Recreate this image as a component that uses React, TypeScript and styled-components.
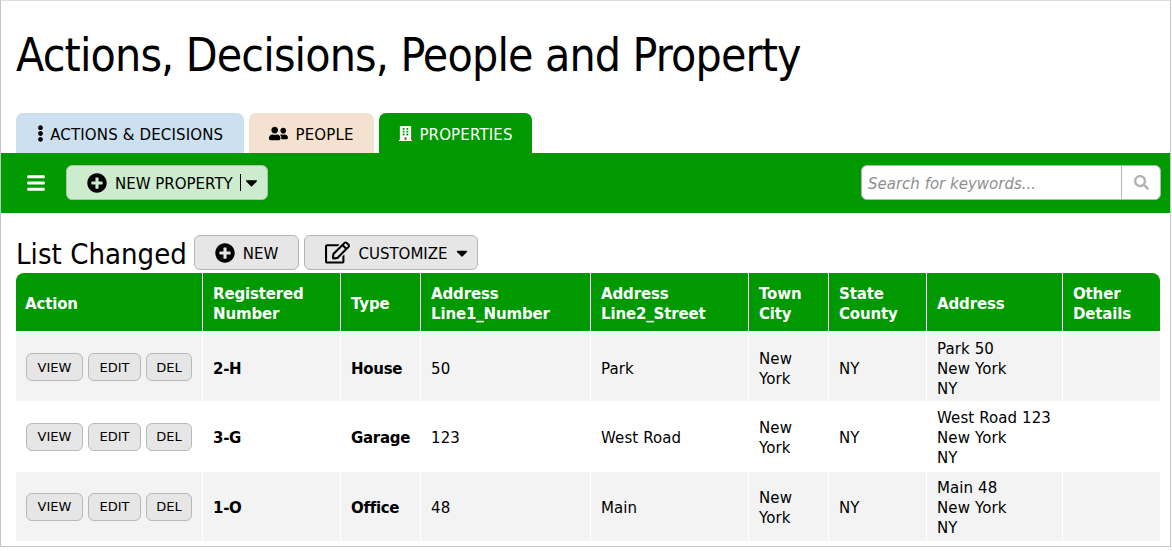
import React from 'react';
import styled, { createGlobalStyle } from 'styled-components';
import { FaBars, FaBuilding, FaCaretDown, FaEllipsisV, FaPlusCircle, FaRegEdit, FaSearch, FaUserFriends } from 'react-icons/fa';

const Global = createGlobalStyle`
  html, body { margin: 0; padding: 0; background: #fff; }
  body { font-family: "DejaVu Sans", Verdana, sans-serif; color: #000; }
  * { box-sizing: border-box; }
`;

const Page = styled.div`
  width: 1171px;
  height: 547px;
  border: 1px solid #c4c4c4;
  border-top-color: #dcdcdc;
  overflow: hidden;
`;

const Title = styled.h1`
  margin: 0;
  padding: 26px 15px 0;
  height: 112px;
  font-size: 46px;
  line-height: 56px;
  font-weight: 400;
  font-stretch: condensed;
  letter-spacing: -0.85px;
  white-space: nowrap;
`;

const Tabs = styled.div`
  display: flex;
  gap: 5px;
  padding-left: 15px;
  height: 40px;
`;

const Tab = styled.div<{ $bg: string; $fg: string; $w: number }>`
  width: ${p => p.$w}px;
  display: flex;
  align-items: center;
  justify-content: center;
  gap: 7px;
  padding-top: 4px;
  background: ${p => p.$bg};
  color: ${p => p.$fg};
  border-radius: 7px 7px 0 0;
  font-size: 15px;
  letter-spacing: 0.15px;
  svg { margin-top: -3px; }
`;

const DotsIcon = styled(FaEllipsisV)`
  font-size: 17px;
  margin-left: -5px;
  margin-right: -5.5px;
`;

const PeopleIcon = styled(FaUserFriends)`
  font-size: 19px;
`;

const BuildingIcon = styled(FaBuilding)`
  font-size: 15px;
  margin-right: -1px;
`;

const Bar = styled.div`
  height: 60px;
  background: #009900;
  display: flex;
  align-items: center;
  padding: 0 9px 1px 25px;
`;

const Burger = styled.span`
  display: flex;
  color: #fff;
  font-size: 20px;
  margin-right: 20px;
`;

const NewProperty = styled.button`
  width: 202px;
  height: 35px;
  padding: 2px 0 0 20px;
  display: flex;
  align-items: center;
  background: #cdebcd;
  border: 1px solid #a9c4a9;
  border-radius: 6px;
  font: inherit;
  font-size: 15px;
  color: #000;
  white-space: nowrap;
`;

const PlusIcon = styled(FaPlusCircle)`
  font-size: 20px;
  margin: -2px 8px 0 0;
  flex: none;
`;

const Divider = styled.span`
  width: 1px;
  height: 17px;
  background: #000;
  margin: -2px 1px 0 7px;
`;

const BarCaret = styled(FaCaretDown)`
  font-size: 19px;
  margin-top: -2px;
`;

const Spacer = styled.div`
  flex: 1;
`;

const Search = styled.div`
  width: 300px;
  height: 35px;
  display: flex;
  background: #fff;
  border: 1px solid #b5b5b5;
  border-radius: 6px;
`;

const SearchInput = styled.input`
  flex: 1;
  min-width: 0;
  border: 0;
  outline: 0;
  background: transparent;
  padding: 3px 6px 0;
  font: inherit;
  font-size: 15px;
  font-style: italic;
  border-radius: 6px 0 0 6px;
  &::placeholder { color: #8f8f8f; opacity: 1; }
`;

const SearchButton = styled.span`
  width: 39px;
  border-left: 1px solid #b5b5b5;
  display: flex;
  align-items: center;
  justify-content: center;
  color: #b3b3b3;
  font-size: 15px;
`;

const ListHead = styled.div`
  display: flex;
  align-items: flex-end;
  gap: 5px;
  height: 60px;
  padding-left: 15px;
`;

const ListTitle = styled.h2`
  margin: 0 2px 0 0;
  padding-top: 2px;
  font-size: 29px;
  line-height: 38px;
  font-weight: 400;
  font-stretch: condensed;
  letter-spacing: 0.05px;
  white-space: nowrap;
`;

const HeadButton = styled.button<{ $w: number; $shift?: number }>`
  width: ${p => p.$w}px;
  height: 35px;
  margin: 0 0 3px;
  padding: 2px 0 0 ${p => p.$shift ?? 0}px;
  display: flex;
  align-items: center;
  justify-content: center;
  background: #e6e6e6;
  border: 1px solid #b5b5b5;
  border-radius: 6px;
  font: inherit;
  font-size: 15px;
  color: #000;
  white-space: nowrap;
`;

const EditIcon = styled(FaRegEdit)`
  font-size: 25px;
  margin: -2px 8px 0 0;
`;

const Caret = styled(FaCaretDown)`
  font-size: 18px;
  margin: -2px 0 0 5px;
`;

const TableWrap = styled.div`
  margin-left: 15px;
  width: 1144px;
`;

const Table = styled.table`
  width: 1144px;
  table-layout: fixed;
  border-collapse: separate;
  border-spacing: 0;
  font-size: 15px;
  line-height: 20px;
`;

const Th = styled.th`
  height: 59px;
  padding: 3px 6px 0 10px;
  background: #009900;
  color: #fff;
  text-align: left;
  font-weight: 700;
  letter-spacing: -0.15px;
  border-left: 1px solid #fff;
  border-bottom: 1px solid #fff;
  white-space: nowrap;
  &:first-child { border-left: 0; border-top-left-radius: 8px; padding-left: 9px; }
  &:last-child { border-top-right-radius: 8px; }
`;

const Row = styled.tr<{ $odd: boolean }>`
  background: ${p => (p.$odd ? '#f3f3f3' : '#fff')};
  height: 69px;
  &:nth-child(2) { height: 71px; }
  &:first-child > td { padding-top: 5px; }
  &:first-child > td:first-child { padding-top: 1px; }
`;

const Td = styled.td<{ $bold?: boolean }>`
  padding: 3px 6px 0 10px;
  font-weight: ${p => (p.$bold ? 700 : 400)};
  letter-spacing: ${p => (p.$bold ? '-0.3px' : '0.1px')};
  border-left: 1px solid #fff;
  white-space: nowrap;
  &:first-child { border-left: 0; padding-top: 0; }
`;

const Actions = styled.div`
  display: flex;
  gap: 5px;
`;

const SmallButton = styled.button<{ $w: number }>`
  width: ${p => p.$w}px;
  height: 28px;
  padding: 1px 0 0;
  background: #e6e6e6;
  border: 1px solid #b5b9b9;
  border-radius: 6px;
  font: inherit;
  font-size: 13px;
  letter-spacing: 0;
  color: #000;
`;

const cols = [
  { label: 'Action', w: 186 },
  { label: <>Registered<br />Number</>, w: 138 },
  { label: 'Type', w: 80 },
  { label: <>Address<br />Line1_Number</>, w: 170 },
  { label: <>Address<br />Line2_Street</>, w: 158 },
  { label: <>Town<br />City</>, w: 80 },
  { label: <>State<br />County</>, w: 98 },
  { label: 'Address', w: 136 },
  { label: <>Other<br />Details</>, w: 98 },
];

const rows = [
  { num: '2-H', type: 'House', line1: '50', line2: 'Park', addr: 'Park 50' },
  { num: '3-G', type: 'Garage', line1: '123', line2: 'West Road', addr: 'West Road 123' },
  { num: '1-O', type: 'Office', line1: '48', line2: 'Main', addr: 'Main 48' },
];

export default function App() {
  return (
    <Page>
      <Global />
      <Title>Actions, Decisions, People and Property</Title>
      <Tabs>
        <Tab $bg="#cce0f0" $fg="#000" $w={228}><DotsIcon />ACTIONS &amp; DECISIONS</Tab>
        <Tab $bg="#f5e1cf" $fg="#000" $w={125}><PeopleIcon />PEOPLE</Tab>
        <Tab $bg="#009900" $fg="#fff" $w={153}><BuildingIcon />PROPERTIES</Tab>
      </Tabs>
      <Bar>
        <Burger><FaBars /></Burger>
        <NewProperty><PlusIcon />NEW PROPERTY<Divider /><BarCaret /></NewProperty>
        <Spacer />
        <Search>
          <SearchInput placeholder="Search for keywords..." />
          <SearchButton><FaSearch /></SearchButton>
        </Search>
      </Bar>
      <ListHead>
        <ListTitle>List Changed</ListTitle>
        <HeadButton $w={105}><PlusIcon />NEW</HeadButton>
        <HeadButton $w={174} $shift={14}><EditIcon />CUSTOMIZE<Caret /></HeadButton>
      </ListHead>
      <TableWrap>
        <Table>
          <colgroup>
            {cols.map((c, i) => <col key={i} width={c.w} />)}
          </colgroup>
          <thead>
            <tr>{cols.map((c, i) => <Th key={i}>{c.label}</Th>)}</tr>
          </thead>
          <tbody>
            {rows.map((r, i) => (
              <Row key={r.num} $odd={i % 2 === 0}>
                <Td>
                  <Actions>
                    <SmallButton $w={57}>VIEW</SmallButton>
                    <SmallButton $w={53}>EDIT</SmallButton>
                    <SmallButton $w={46}>DEL</SmallButton>
                  </Actions>
                </Td>
                <Td $bold>{r.num}</Td>
                <Td $bold>{r.type}</Td>
                <Td>{r.line1}</Td>
                <Td>{r.line2}</Td>
                <Td>New<br />York</Td>
                <Td>NY</Td>
                <Td>{r.addr}<br />New York<br />NY</Td>
                <Td />
              </Row>
            ))}
          </tbody>
        </Table>
      </TableWrap>
    </Page>
  );
}
